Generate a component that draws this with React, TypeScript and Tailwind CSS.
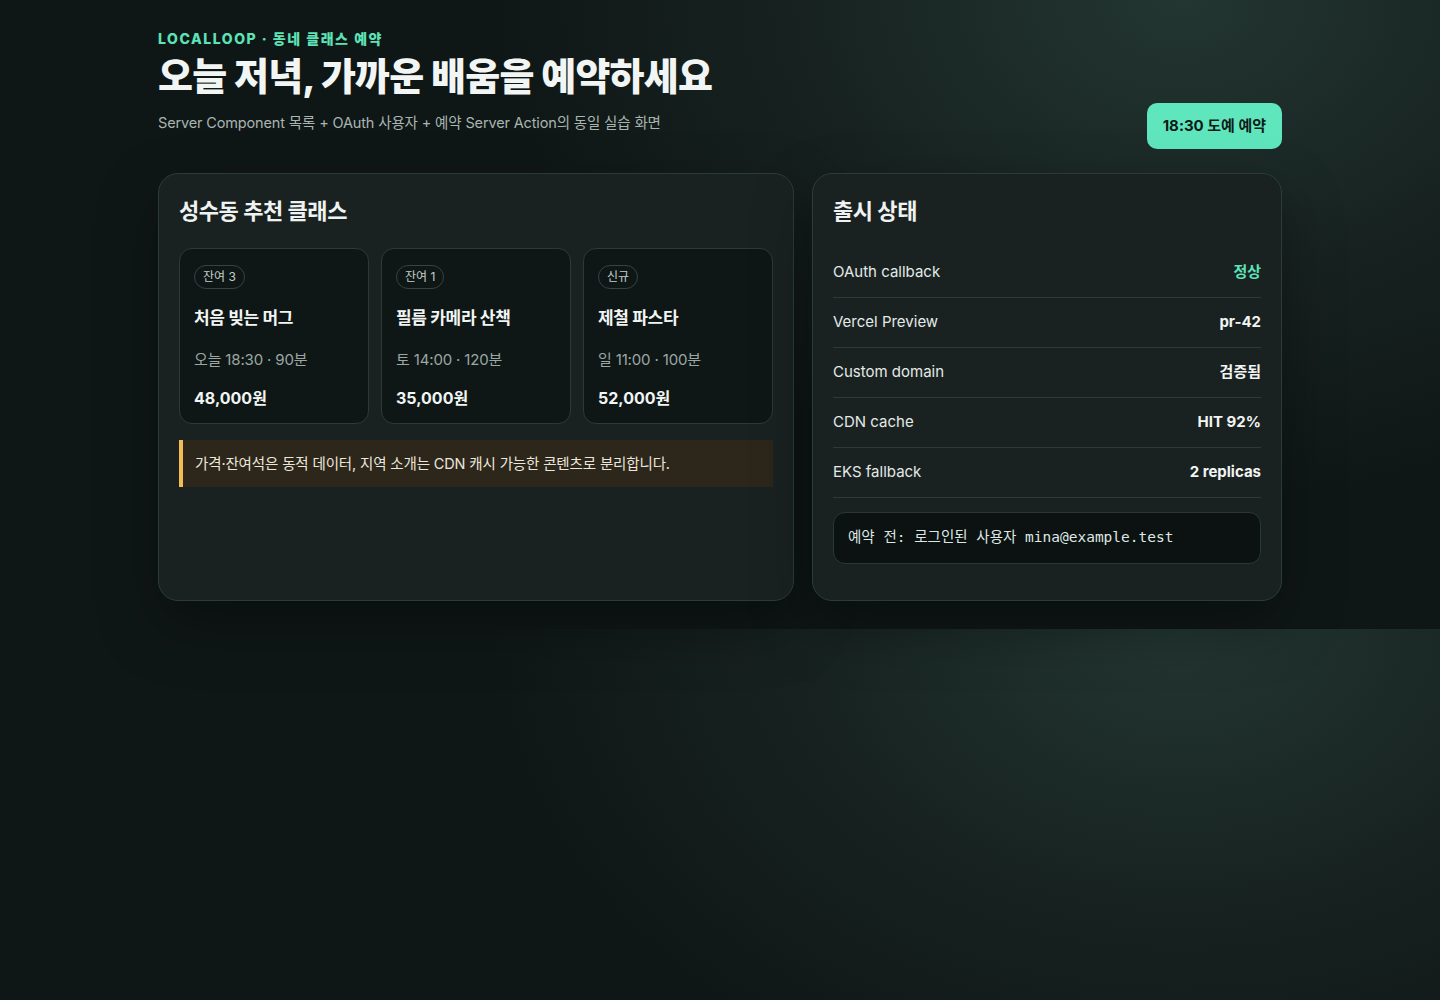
import type { ReactNode } from "react";

const classes = [
  { seats: "잔여 3", title: "처음 빚는 머그", meta: "오늘 18:30 · 90분", price: "48,000원" },
  { seats: "잔여 1", title: "필름 카메라 산책", meta: "토 14:00 · 120분", price: "35,000원" },
  { seats: "신규", title: "제철 파스타", meta: "일 11:00 · 100분", price: "52,000원" },
];

const releaseRows: { label: string; value: string; ok?: boolean }[] = [
  { label: "OAuth callback", value: "정상", ok: true },
  { label: "Vercel Preview", value: "pr-42" },
  { label: "Custom domain", value: "검증됨" },
  { label: "CDN cache", value: "HIT 92%" },
  { label: "EKS fallback", value: "2 replicas" },
];

function Panel({ title, children }: { title: string; children: ReactNode }) {
  return (
    <section className="rounded-[20px] border border-[#2b3c38] bg-[#1a2221] px-5 pt-5 pb-9 shadow-[0_24px_60px_rgba(0,0,0,0.35)]">
      <h2 className="mb-5 text-[22px] font-bold leading-[34px] tracking-[-0.02em] text-[#eef3f1]">{title}</h2>
      {children}
    </section>
  );
}

export default function App() {
  return (
    <div
      className="min-h-screen bg-[#0f1716] bg-[radial-gradient(ellipse_60%_100%_at_82%_0%,#233631_0%,#172220_45%,#0f1716_80%)] bg-[length:100%_629px] bg-repeat-y text-[#e9efed]"
      style={{ fontFamily: 'Inter, "Noto Sans CJK KR", sans-serif' }}
    >
      <main className="mx-auto w-[1124px] pt-[29px] pb-7">
        <header className="flex items-end justify-between">
          <div>
            <p className="text-[14px] font-extrabold leading-5 tracking-[0.11em] text-[#5de3b7]">LOCALLOOP · 동네 클래스 예약</p>
            <h1 className="mt-[3px] text-[38px] font-extrabold leading-[48px] tracking-[-0.02em] text-[#f1f5f3]">
              오늘 저녁, 가까운 배움을 예약하세요
            </h1>
            <p className="mt-[13px] text-[14.5px] leading-5 tracking-[-0.01em] text-[#a9b5b1]">
              Server Component 목록 + OAuth 사용자 + 예약 Server Action의 동일 실습 화면
            </p>
          </div>
          <button className="mb-[-16px] h-[46px] rounded-[10px] bg-[#5fe6bd] px-4 text-[15px] font-bold text-[#0d1a17]">
            18:30 도예 예약
          </button>
        </header>

        <div className="mt-[40px] grid grid-cols-[636px_470px] gap-[18px]">
          <Panel title="성수동 추천 클래스">
            <div className="grid grid-cols-3 gap-3">
              {classes.map((c) => (
                <article key={c.title} className="h-[176px] rounded-[13px] border border-[#2b3a37] bg-[#0f1716] px-[14px] pt-[14px]">
                  <span className="inline-flex h-6 items-center rounded-full border border-[#34443f] px-2 text-[12px] text-[#c3cdca]">
                    {c.seats}
                  </span>
                  <h3 className="mt-[17px] text-[17px] font-bold leading-6 tracking-[-0.02em] text-[#f1f5f3]">{c.title}</h3>
                  <p className="mt-[20px] text-[15px] leading-5 tracking-[-0.01em] text-[#9ba7a4]">{c.meta}</p>
                  <p className="mt-[16px] text-[16px] font-bold leading-6 text-[#f1f5f3]">{c.price}</p>
                </article>
              ))}
            </div>
            <div className="mt-4 flex h-[47px] items-center border-l-4 border-[#f2bd55] bg-[#2d261a] pl-[12px] text-[14.5px] tracking-[-0.01em] text-[#ece7dc]">
              가격·잔여석은 동적 데이터, 지역 소개는 CDN 캐시 가능한 콘텐츠로 분리합니다.
            </div>
          </Panel>

          <Panel title="출시 상태">
            <ul>
              {releaseRows.map((r) => (
                <li key={r.label} className="flex h-[50px] items-center justify-between border-b border-[#2c3b38] text-[15px]">
                  <span className="text-[#e3eae8]">{r.label}</span>
                  <span className={r.ok ? "font-bold text-[#5de3b7]" : "font-bold text-[#f1f5f3]"}>{r.value}</span>
                </li>
              ))}
            </ul>
            <div
              className="mt-[14px] flex h-[52px] items-center rounded-[12px] border border-[#2a3835] bg-[#0b1211] px-[14px] text-[14.5px] text-[#dfe7e4]"
              style={{ fontFamily: '"DejaVu Sans Mono", "Noto Sans CJK KR", monospace' }}
            >
              예약 전: 로그인된 사용자 mina@example.test
            </div>
          </Panel>
        </div>
      </main>
    </div>
  );
}
